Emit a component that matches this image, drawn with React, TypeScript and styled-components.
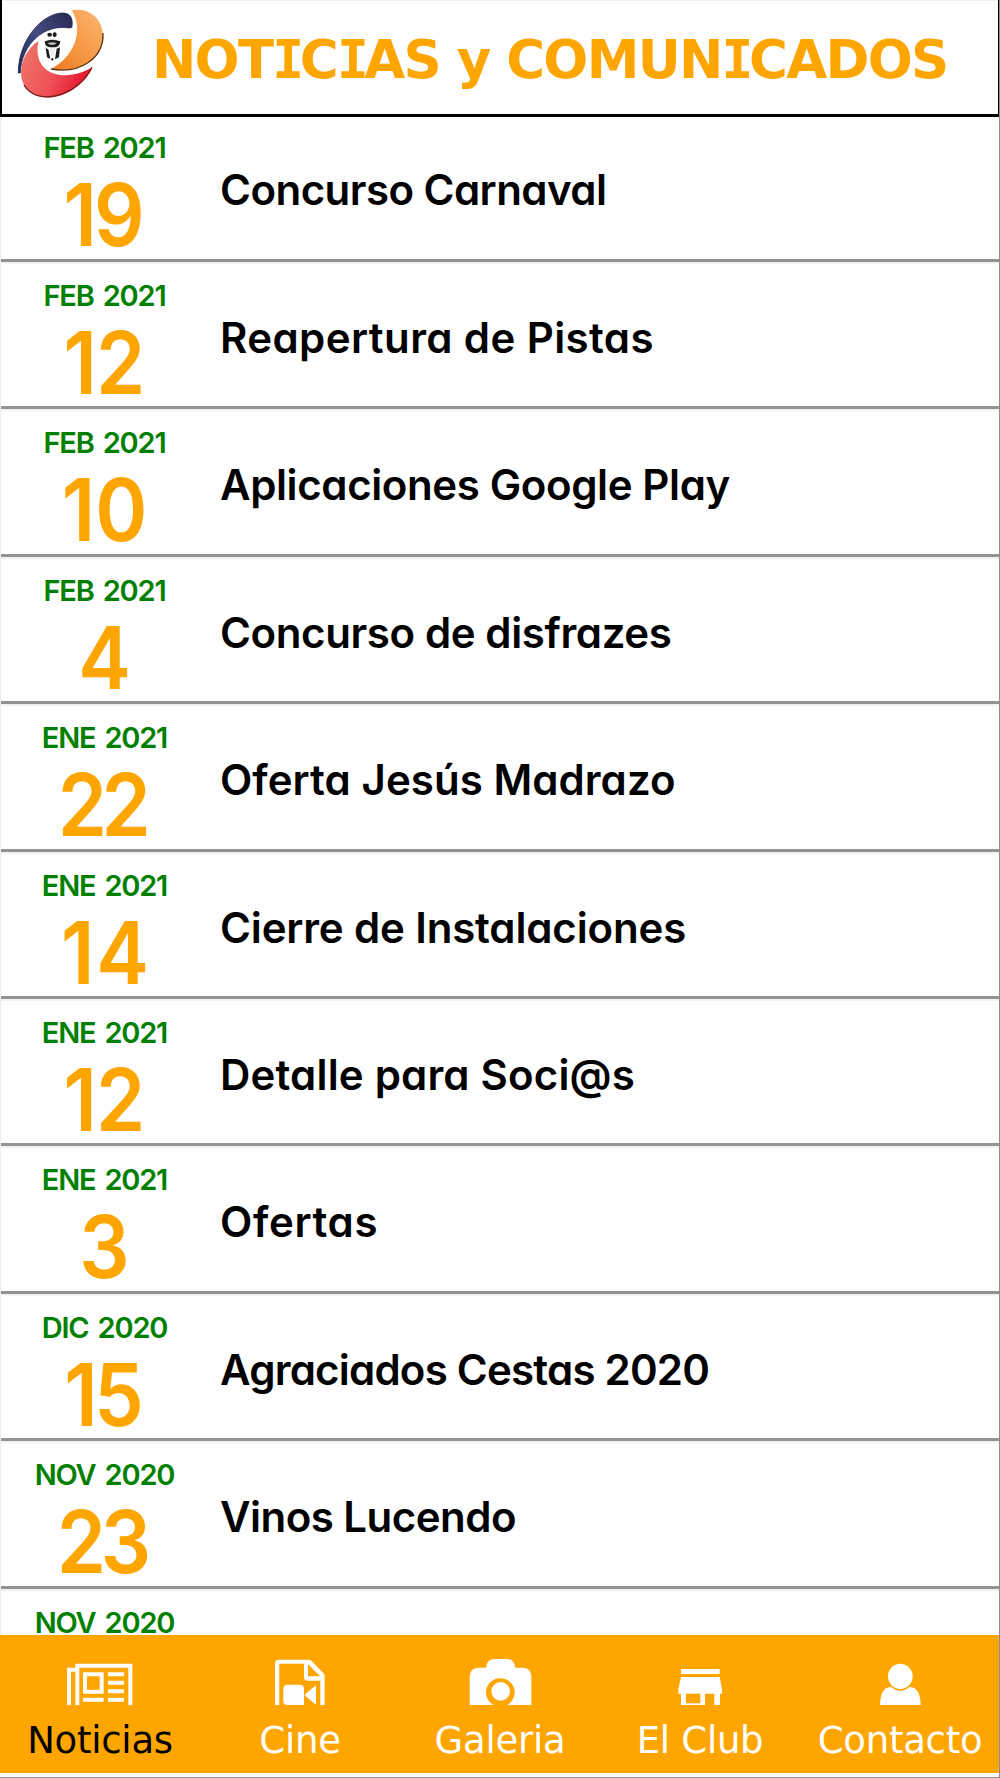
import type { ReactNode } from 'react';
import styled, { createGlobalStyle } from 'styled-components';

const GlobalStyle = createGlobalStyle`
    * {
        box-sizing: border-box;
    }
    body {
        margin: 0;
        background: #ffffff;
    }
`;
const Page = styled.div`
    display: flex;
    flex-direction: column;
    width: 1000px;
    height: 1778px;
    overflow: hidden;
    background: #fefefe;
    border-right: 1px solid #8c8c8c;
    border-bottom: 1px solid #8c8c8c;
`;
const Header = styled.header`
    display: flex;
    align-items: flex-start;
    flex: none;
    width: 1000px;
    height: 117px;
    border: solid #000000;
    border-width: 0 2px 3px 2px;
    box-shadow: inset 0 1px 0 #eeeeee;
`;
const Logo = styled.svg`
    flex: none;
    width: 90px;
    height: 90px;
    margin: 8px 0 0 14px;
`;
const Title = styled.h1`
    margin: 29px 0 0 46px;
    color: #ffa500;
    font-family: 'DejaVu Sans', sans-serif;
    font-size: 53px;
    line-height: 62px;
    font-weight: bold;
    letter-spacing: -1.75px;
    white-space: nowrap;
`;
const SerifCap = styled.span`
    font-family: 'DejaVu Sans Mono', monospace;
    letter-spacing: -4.5px;
`;
const NewsList = styled.ul`
    flex: 1;
    min-height: 0;
    margin: 0;
    padding: 0;
    overflow: hidden;
    list-style: none;
    border-left: 1px solid #eeeeee;
`;
const NewsRow = styled.li`
    display: flex;
    height: 147.4px;
    border-bottom: 3px solid #939393;
    box-shadow: inset 0 2px 1px #f1f1f1;
    font-family: Inter, sans-serif;
    font-feature-settings: 'cv11';
    &:first-child {
        height: 145px;
        box-shadow: none;
    }
    &:first-child > * {
        margin-top: -3px;
    }
    &:last-child {
        height: 48px;
        border-bottom: none;
    }
`;
const DateColumn = styled.div`
    display: flex;
    flex-direction: column;
    align-items: center;
    width: 207px;
`;
const Month = styled.div`
    margin-top: 21px;
    color: #008000;
    font-size: 29px;
    line-height: 26px;
    font-weight: 600;
    letter-spacing: -1.2px;
    word-spacing: 3px;
    white-space: nowrap;
`;
const Day = styled.div<{ $tracking: number }>`
    margin-top: 10px;
    margin-right: ${(props) => -props.$tracking}px;
    color: #ffa500;
    font-size: 86px;
    line-height: 88px;
    font-weight: 600;
    letter-spacing: ${(props) => props.$tracking}px;
    transform: scaleX(0.92);
`;
const Headline = styled.div<{ $tracking: number }>`
    padding: 50px 0 0 12px;
    color: #000000;
    font-size: 42px;
    line-height: 52px;
    font-weight: 600;
    letter-spacing: ${(props) => props.$tracking}px;
    white-space: nowrap;
`;
const TabBar = styled.nav`
    display: flex;
    flex: none;
    width: 1000px;
    height: 138px;
    margin-bottom: 4px;
    background: #ffa500;
`;
const Tab = styled.a<{ $active?: boolean }>`
    display: flex;
    flex-direction: column;
    align-items: center;
    width: 200px;
    padding-top: 24px;
    color: ${(props) => (props.$active ? '#000000' : '#ffffff')};
    font-family: 'DejaVu Sans', sans-serif;
    font-size: 37px;
    line-height: 44px;
    letter-spacing: -0.25px;
    white-space: nowrap;
`;
const Glyph = styled.svg`
    width: 66.67px;
    height: 46px;
    margin-bottom: 14px;
    fill: #ffffff;
`;

interface NewsItem {
    month: string;
    day: number;
    dayTracking: number;
    title: string;
    tracking: number;
}

const news: NewsItem[] = [
    { month: 'FEB 2021', day: 19, dayTracking: -3, title: 'Concurso Carnaval', tracking: -0.53 },
    { month: 'FEB 2021', day: 12, dayTracking: -1, title: 'Reapertura de Pistas', tracking: 0.4 },
    { month: 'FEB 2021', day: 10, dayTracking: 0, title: 'Aplicaciones Google Play', tracking: -0.38 },
    { month: 'FEB 2021', day: 4, dayTracking: 0, title: 'Concurso de disfrazes', tracking: -0.38 },
    { month: 'ENE 2021', day: 22, dayTracking: -6, title: 'Oferta Jesús Madrazo', tracking: 0.06 },
    { month: 'ENE 2021', day: 14, dayTracking: 2, title: 'Cierre de Instalaciones', tracking: -0.15 },
    { month: 'ENE 2021', day: 12, dayTracking: -1, title: 'Detalle para Soci@s', tracking: 0.18 },
    { month: 'ENE 2021', day: 3, dayTracking: 0, title: 'Ofertas', tracking: 0.65 },
    { month: 'DIC 2020', day: 15, dayTracking: -4, title: 'Agraciados Cestas 2020', tracking: -0.77 },
    { month: 'NOV 2020', day: 23, dayTracking: -6, title: 'Vinos Lucendo', tracking: -0.52 },
];

const tabs: { label: string; icon: ReactNode }[] = [
    {
        label: 'Noticias',
        icon: (
            <>
                <path d="M0 138V26h25V14h171v124h-12V26H37v112H25V38H12v100z" />
                <path fillRule="evenodd" d="M48 40h62v64H48zM60 52v40h38V52z" />
                <path d="M123 40h48v12h-48zM123 65h48v12h-48zM123 91h48v12h-48zM123 116h48v12h-48zM48 116h62v12H48z" />
            </>
        ),
    },
    {
        label: 'Cine',
        icon: (
            <>
                <path
                    fillRule="evenodd"
                    d="M24 138V14Q24 2 36 2h88q6 0 10 4l35 36q4 4 4 10v86h-13V65h-38q-11 0-11-11V14H37v124zM123 16v36h37z"
                />
                <path d="M61 77h38q12 0 12 12v49H61q-12 0-12-12V89q0-12 12-12zM147 79v58l-32-26q-3-3 0-6z" />
            </>
        ),
    },
    {
        label: 'Galeria',
        icon: (
            <>
                <path d="M8 138V50q2-22 25-24h24q3-25 23-26h42q20 1 23 26h24q22 2 24 24v88h-72a43 43 0 1 0-42 0z" />
                <circle cx="101" cy="97" r="28" />
            </>
        ),
    },
    {
        label: 'El Club',
        icon: (
            <>
                <path d="M42 30h116v15H42zM42 54h116l7 37v13h-6v34h-17v-34h-28v34H42v-34h-8V91z" />
                <path d="M57 104h43v29H57z" fill="#ffa500" />
            </>
        ),
    },
    {
        label: 'Contacto',
        icon: (
            <>
                <ellipse cx="100" cy="52" rx="37" ry="38" />
                <path d="M39 138q1-47 26-53l8-1q28 23 54 0l8 1q25 6 26 53z" />
            </>
        ),
    },
];

function ClubLogo() {
    return (
        <Logo viewBox="50 25 270 270">
            <defs>
                <linearGradient id="navy" x1="0" y1="1" x2="1" y2="0">
                    <stop offset="0" stopColor="#14285c" />
                    <stop offset="0.5" stopColor="#454b83" />
                    <stop offset="1" stopColor="#252750" />
                </linearGradient>
                <linearGradient id="amber" x1="1" y1="0" x2="0" y2="1">
                    <stop offset="0" stopColor="#fbb873" />
                    <stop offset="0.6" stopColor="#f6943f" />
                    <stop offset="1" stopColor="#ee7a20" />
                </linearGradient>
                <linearGradient id="red" x1="0" y1="0.2" x2="1" y2="0.5">
                    <stop offset="0" stopColor="#ee7469" />
                    <stop offset="0.5" stopColor="#ef5457" />
                    <stop offset="1" stopColor="#e5122c" />
                </linearGradient>
            </defs>
            <path
                d="M57 220C56 120 132 38 192 40q32 1 26 43l-7 2C137 72 67 130 63 220z"
                fill="url(#navy)"
                stroke="#151b42"
                strokeWidth="2"
            />
            <path
                d="M217 32C268 22 311 56 311 110C310 172 245 224 155 208C218 176 258 97 217 32z"
                fill="url(#amber)"
            />
            <path d="M311 100C314 174 245 224 155 208" fill="none" stroke="#5e3210" strokeWidth="4" />
            <path
                d="M117 124C63 160 48 236 87 273C150 320 242 280 278 203C212 246 96 236 117 124z"
                fill="url(#red)"
            />
            <path d="M74 256C115 326 242 284 278 203" fill="none" stroke="#721c1c" strokeWidth="4" />
            <g fill="#1c1c1c">
                <ellipse cx="151" cy="105" rx="7" ry="6" />
                <ellipse cx="166" cy="105" rx="6" ry="7" />
                <path d="M136 125q22-9 47 0-2 17-15 18h-18q-13-2-14-18z" />
                <path d="M139 145l8 4 6 29-10-5zM182 143l-3 30-12 6 5-32z" />
                <ellipse cx="159" cy="179" rx="3" ry="4" />
            </g>
            <path d="M144 131q14-6 28 0l-8 4h-12z" fill="#bdbdbd" />
            <path d="M151 145h16l-3 25h-9z" fill="#eeeeee" />
        </Logo>
    );
}

export default function App() {
    return (
        <>
            <GlobalStyle />
            <Page>
                <Header>
                    <ClubLogo />
                    <Title>
                        NOT<SerifCap>I</SerifCap>C<SerifCap>I</SerifCap>AS y COMUN<SerifCap>I</SerifCap>CADOS
                    </Title>
                </Header>
                <NewsList>
                    {news.map((item) => (
                        <NewsRow key={item.title}>
                            <DateColumn>
                                <Month>{item.month}</Month>
                                <Day $tracking={item.dayTracking}>{item.day}</Day>
                            </DateColumn>
                            <Headline $tracking={item.tracking}>{item.title}</Headline>
                        </NewsRow>
                    ))}
                    <NewsRow>
                        <DateColumn>
                            <Month>NOV 2020</Month>
                        </DateColumn>
                    </NewsRow>
                </NewsList>
                <TabBar>
                    {tabs.map((tab, index) => (
                        <Tab key={tab.label} $active={index === 0}>
                            <Glyph viewBox="0 0 200 138">{tab.icon}</Glyph>
                            {tab.label}
                        </Tab>
                    ))}
                </TabBar>
            </Page>
        </>
    );
}
